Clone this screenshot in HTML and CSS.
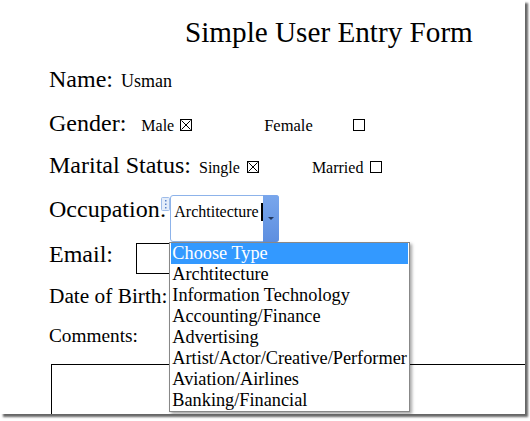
FILE: index.html
```html
<!DOCTYPE html>
<html>
<head>
<meta charset="utf-8">
<link rel="stylesheet" href="styles.css">
</head>
<body>
<div class="sheet">
  <div class="title-row"><h1 class="title">Simple User Entry Form</h1></div>

  <div class="row r-name">
    <span class="label">Name:</span>
    <span class="value v-name">Usman</span>
  </div>

  <div class="row r-gender">
    <span class="label">Gender:</span>
    <span class="opt o-male">Male</span>
    <svg class="chk c-male" width="12" height="12" viewBox="0 0 12 12"><rect x="0.5" y="0.5" width="11" height="11" fill="none" stroke="#000"/><path d="M1.5 1.5 L10.5 10.5 M10.5 1.5 L1.5 10.5" stroke="#000" stroke-width="1"/></svg>
    <span class="opt o-female">Female</span>
    <svg class="chk c-female" width="12" height="12" viewBox="0 0 12 12"><rect x="0.5" y="0.5" width="11" height="11" fill="none" stroke="#000"/></svg>
  </div>

  <div class="row r-marital">
    <span class="label">Marital Status:</span>
    <span class="opt o-single">Single</span>
    <svg class="chk c-single" width="12" height="12" viewBox="0 0 12 12"><rect x="0.5" y="0.5" width="11" height="11" fill="none" stroke="#000"/><path d="M1.5 1.5 L10.5 10.5 M10.5 1.5 L1.5 10.5" stroke="#000" stroke-width="1"/></svg>
    <span class="opt o-married">Married</span>
    <svg class="chk c-married" width="12" height="12" viewBox="0 0 12 12"><rect x="0.5" y="0.5" width="11" height="11" fill="none" stroke="#000"/></svg>
  </div>

  <div class="row r-occ">
    <span class="label">Occupation:</span>
    <div class="combo">
      <svg class="grip" width="9" height="14" viewBox="0 0 9 14"><rect x="0.5" y="0.5" width="8" height="13" rx="1" fill="#e4edfa" stroke="#9fbce9"/><rect x="4" y="3" width="1.5" height="1.5" fill="#5b84c9"/><rect x="4" y="6.5" width="1.5" height="1.5" fill="#5b84c9"/><rect x="4" y="10" width="1.5" height="1.5" fill="#5b84c9"/></svg>
      <div class="combo-field"><span class="combo-text">Archtitecture</span><span class="caret"></span></div>
      <div class="combo-btn"><span class="arrow"></span></div>
      <ul class="dropdown">
        <li class="sel">Choose Type</li>
        <li>Archtitecture</li>
        <li>Information Technology</li>
        <li>Accounting/Finance</li>
        <li>Advertising</li>
        <li>Artist/Actor/Creative/Performer</li>
        <li>Aviation/Airlines</li>
        <li>Banking/Financial</li>
      </ul>
    </div>
  </div>

  <div class="row r-email">
    <span class="label">Email:</span>
    <div class="email-box"></div>
  </div>

  <div class="row r-dob">
    <span class="label small">Date of Birth:</span>
  </div>

  <div class="row r-comments">
    <span class="label smaller">Comments:</span>
  </div>

  <div class="comment-box"></div>
</div>
</body>
</html>
```

FILE: styles.css
```css
html, body {
  margin: 0;
  padding: 0;
  background: #fff;
}
body {
  font-family: "Liberation Serif", "Times New Roman", serif;
  color: #000;
  width: 530px;
  height: 421px;
  overflow: hidden;
}
.sheet {
  width: 525px;
  height: 414px;
  background: #fff;
  box-shadow: 3px 3px 2px rgba(0, 0, 0, 0.6);
  overflow: hidden;
  box-sizing: border-box;
  padding: 14px 0 0 49px;
}
.title-row {
  height: 51px;
}
.title {
  margin: 0 0 0 136px;
  font-weight: normal;
  font-size: 29.2px;
  line-height: 36px;
  white-space: nowrap;
}
.row {
  display: flex;
  align-items: baseline;
  white-space: nowrap;
}
.label {
  font-size: 24px;
  line-height: 28px;
}
.label.small { font-size: 21.33px; }
.label.smaller { font-size: 19.3px; }

.r-name { height: 44px; }
.r-gender { height: 42px; }
.r-marital { height: 44px; }
.r-occ { height: 45px; }
.r-email { height: 42px; }
.r-dob { height: 40px; }
.r-comments { height: 42px; }

.value { font-size: 18px; }
.v-name { margin-left: 8px; }
.opt { font-size: 16px; }
.chk { display: block; flex: none; }

.o-male { margin-left: 15px; }
.c-male { margin-left: 6px; }
.o-female { margin-left: 72px; font-size: 16.5px; }
.c-female { margin-left: 40px; }

.o-single { margin-left: 8px; }
.c-single { margin-left: 7px; }
.o-married { margin-left: 53px; }
.c-married { margin-left: 7px; }

.combo {
  position: relative;
  align-self: flex-start;
  margin-left: 4px;
  width: 107px;
  height: 45px;
  border: 1px solid #8db3ea;
  border-radius: 3px;
  display: flex;
  background: #fff;
}
.grip {
  position: absolute;
  left: -10px;
  top: 1px;
}
.combo-field {
  flex: 1;
  padding: 6px 0 0 3px;
  font-size: 16px;
  line-height: 20px;
}
.caret {
  display: inline-block;
  width: 2px;
  height: 18px;
  background: #000;
  margin-left: 2px;
  vertical-align: -4px;
}
.combo-btn {
  width: 16px;
  margin: -1px -1px -1px 0;
  border-radius: 0 3px 3px 0;
  background: linear-gradient(#79a6ec, #5d8fe0);
  display: flex;
  justify-content: center;
}
.arrow {
  margin-top: 22px;
  width: 0;
  height: 0;
  border-left: 3px solid transparent;
  border-right: 3px solid transparent;
  border-top: 3px solid #23385e;
}
.dropdown {
  position: absolute;
  left: -2px;
  top: 46px;
  width: 237px;
  margin: 0;
  padding: 0 1px;
  list-style: none;
  background: #fff;
  border: 1px solid #888;
  box-shadow: 2px 2px 3px rgba(0, 0, 0, 0.35);
  font-size: 18.3px;
  line-height: 21px;
  z-index: 5;
}
.dropdown li {
  height: 21px;
  padding-left: 1px;
  overflow: hidden;
}
.dropdown li.sel {
  background: #3399ff;
  color: #fff;
}
.email-box {
  align-self: flex-start;
  margin: 3px 0 0 23px;
  width: 60px;
  height: 29px;
  border: 1px solid #000;
}
.comment-box {
  margin-left: 2px;
  width: 600px;
  height: 100px;
  border-top: 1px solid #000;
  border-left: 1px solid #000;
}
```
